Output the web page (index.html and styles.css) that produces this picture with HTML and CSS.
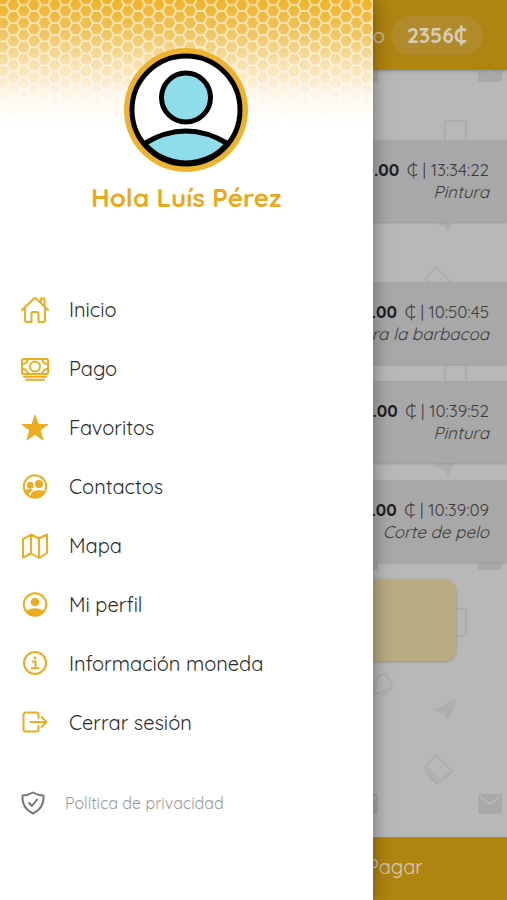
FILE: index.html
```html
<!DOCTYPE html>
<html lang="es">
<head>
<meta charset="UTF-8">
<meta name="viewport" content="width=device-width, initial-scale=1.0">
<title>Menú</title>
<link rel="stylesheet" href="styles.css">
</head>
<body>
<div class="page">
  <svg class="page-bg" aria-hidden="true">
    <defs>
      <pattern id="doodles" width="248" height="244" patternUnits="userSpaceOnUse" patternTransform="translate(368 670)">
        <path d="M5 20 C11 16 6 8 12 5 C18 2 22 8 24 18 L8 24 Z M13 25 L19 23" fill="none" stroke="#adadad" stroke-width="2"/>
        <path d="M89 28 L65 40 L73 43 L76 44 L80 52 Z M87 31 L75 42" fill="#adadad" stroke="#b5b5b5"/>
        <path d="M68 85 L84 101 L73 111 L57 97 Z" fill="none" stroke="#adadad" stroke-width="2"/>
        <path d="M56 98 L72 113 L69 115 L64 111 L61 111 L61 107 Z" fill="#adadad"/>
        <g id="mail">
          <rect x="110" y="124" width="24" height="20" rx="2" fill="#a9a9a9"/>
          <path d="M112 127 L122 134 L132 127" fill="none" stroke="#b8b8b8" stroke-width="2"/>
        </g>
        <use href="#mail" x="-124"/>
        <use href="#mail" x="124"/>
        <rect x="77" y="183" width="21" height="27" rx="1" fill="none" stroke="#adadad" stroke-width="2"/>
      </pattern>
    </defs>
    <rect width="100%" height="100%" fill="url(#doodles)"/>
  </svg>

  <header class="topbar">
    <span class="topbar-label">Saldo</span>
    <span class="balance">2356₵</span>
  </header>

  <main class="moves">
    <section class="day">
      <article class="move">
        <p class="amount"><b>.00</b> <span class="coin">₵</span> | 13:34:22</p>
        <p class="concept">Pintura</p>
      </article>
    </section>
    <section class="day">
      <article class="move">
        <p class="amount"><b>.00</b> <span class="coin">₵</span> | 10:50:45</p>
        <p class="concept">Para la barbacoa</p>
      </article>
      <article class="move">
        <p class="amount"><b>.00</b> <span class="coin">₵</span> | 10:39:52</p>
        <p class="concept">Pintura</p>
      </article>
      <article class="move">
        <p class="amount"><b>.00</b> <span class="coin">₵</span> | 10:39:09</p>
        <p class="concept">Corte de pelo</p>
      </article>
      <div class="notice"></div>
    </section>
  </main>

  <footer class="paybar">
    <button class="pay" type="button">Pagar</button>
  </footer>
</div>

<aside class="drawer">
  <svg class="honeycomb" aria-hidden="true">
    <defs>
      <linearGradient id="honey" x1="0" y1="0" x2="0" y2="1">
        <stop offset="0" stop-color="#eeb32a"/>
        <stop offset="0.25" stop-color="#f0c45c"/>
        <stop offset="0.5" stop-color="#f6dfa9"/>
        <stop offset="0.75" stop-color="#fdf6e6"/>
        <stop offset="1" stop-color="#ffffff"/>
      </linearGradient>
      <pattern id="cells" width="20.8" height="12.1" patternUnits="userSpaceOnUse" patternTransform="translate(2.9 11)">
        <path d="M-3.5 6 H3.5 L6.9 0 H13.9 L17.3 6 H24.3 M3.5 6 L6.9 12.1 H13.9 L17.3 6" fill="none" stroke="#fff" stroke-opacity="0.75" stroke-width="1.5"/>
      </pattern>
    </defs>
    <rect width="100%" height="100%" fill="url(#honey)"/>
    <rect width="100%" height="100%" fill="url(#cells)"/>
  </svg>

  <div class="profile">
    <svg class="avatar" viewBox="0 0 124 124" aria-hidden="true">
      <circle cx="62" cy="62" r="62" fill="#edb32f"/>
      <circle cx="62" cy="62" r="54" fill="#fff"/>
      <path d="M20.5 95.5 Q62 70.5 103.5 95.5 A54 54 0 0 1 20.5 95.5 Z" fill="#8fdcea" stroke="#000" stroke-width="5"/>
      <circle cx="62" cy="62" r="54" fill="none" stroke="#000" stroke-width="5"/>
      <circle cx="62" cy="49.5" r="24.5" fill="#8fdcea" stroke="#000" stroke-width="5"/>
    </svg>
    <h1 class="hello">Hola Luís Pérez</h1>
  </div>

  <nav>
    <ul class="menu">
      <li><a href="#">
        <svg class="icon" viewBox="0 0 28 28"><path d="M4 13 V24 Q4 26 6 26 H10.500 V18 Q10.500 16 12.500 16 H15.500 Q17.500 16 17.500 18 V26 H22 Q24 26 24 24 V13 M1 14 L13 2.500 Q14 1.500 15 2.500 L27 14 M20 7 V2.500 H23.500 V10.500"/></svg>
        Inicio</a></li>
      <li><a href="#">
        <svg class="icon" viewBox="0 0 28 28"><rect x="1" y="4" width="26" height="15" rx="1.500"/><circle cx="14" cy="11.500" r="5"/><path d="M1 9 Q6 9 7 4 M21 4 Q22 9 27 9 M1 14 Q6 14 7 19 M21 19 Q22 14 27 14 M3 21.800 H25 M5 24.700 H23"/></svg>
        Pago</a></li>
      <li><a href="#">
        <svg class="icon icon-solid" viewBox="0 0 28 28"><path d="M14 1.500 L17.300 10.500 H27 L19.300 16.200 L22 26 L14 20.200 L6 26 L8.700 16.200 L1 10.500 H10.700 Z"/></svg>
        Favoritos</a></li>
      <li><a href="#">
        <svg class="icon" viewBox="0 0 28 28"><circle cx="14" cy="13.500" r="11.200"/><path class="fill" d="M9.500 22.500 Q10 17.500 17.500 17.200 Q23 17 24 18.500 Q21 24.500 14 24.700 Q11 24.500 9.500 22.500 Z M3.500 17.500 Q8 15 12.500 17 Q8.500 18.500 7.500 22 Q4.500 20 3.500 17.500 Z"/><circle class="fill" cx="18" cy="11" r="4"/><circle class="fill" cx="9.300" cy="12.200" r="3.500"/></svg>
        Contactos</a></li>
      <li><a href="#">
        <svg class="icon" viewBox="0 0 28 28"><path d="M2 7.200 L10 2.500 L18 6.500 L26 2.500 V21 L18 26 L10 21.500 L2 25.500 Z M10 2.500 V21.500 M18 6.500 V26"/></svg>
        Mapa</a></li>
      <li><a href="#">
        <svg class="icon" viewBox="0 0 28 28"><circle cx="14" cy="13.500" r="11.200"/><circle class="fill" cx="14" cy="11" r="4.300"/><path class="fill" d="M5 20.500 Q8 17.300 14 17.300 Q20 17.300 23 20.500 Q19 25 14 25 Q9 25 5 20.500 Z"/></svg>
        Mi perfil</a></li>
      <li><a href="#">
        <svg class="icon" viewBox="0 0 28 28"><circle cx="14" cy="13" r="11"/><path d="M11.500 11.500 H14.500 V18 M10.800 18.300 H17.500"/><circle class="fill" cx="14" cy="7.800" r="1.500"/></svg>
        Información moneda</a></li>
      <li><a href="#">
        <svg class="icon" viewBox="0 0 28 28"><path d="M17.500 9 V5.500 Q17.500 3.500 15.500 3.500 H5 Q2.500 3.500 2.500 6 V20 Q2.500 22.500 5 22.500 H15.500 Q17.500 22.500 17.500 20.500 V17 M9.500 13 H25 M20.500 8 L25.500 13 L20.500 18"/></svg>
        Cerrar sesión</a></li>
    </ul>
  </nav>

  <a class="privacy" href="#">
    <svg class="shield" viewBox="0 0 24 24" aria-hidden="true"><path d="M12 1.500 Q7 4.500 1.500 4.500 Q0.500 17 12 22.500 Q23.500 17 22.500 4.500 Q17 4.500 12 1.500 Z M8 12 L11 15 L16 8.500"/></svg>
    Política de privacidad
  </a>
</aside>
</body>
</html>
```
FILE: styles.css
```css
* {
  box-sizing: border-box;
}
body {
  margin: 0;
  font-family: Quicksand, Lato, "Open Sans", sans-serif;
  color: #2b2b2b;
}
p, h1, ul {
  margin: 0;
  padding: 0;
}
a {
  color: inherit;
  text-decoration: none;
}

/* page behind the drawer */
.page {
  position: relative;
  display: flex;
  flex-direction: column;
  min-height: 100vh;
  background: #b8b8b8;
}
.page-bg {
  position: absolute;
  width: 100%;
  height: 100%;
}
.topbar, .moves, .paybar {
  position: relative;
}
.topbar {
  display: flex;
  align-items: center;
  justify-content: flex-end;
  gap: 6px;
  height: 70px;
  padding: 0 24px;
  background: #b08411;
  color: #d6cdb8;
  font-size: 20px;
  box-shadow: 0 1px 3px #8a8a8a;
}
.balance {
  padding: 7px 16px;
  border-radius: 20px;
  background: #b18a2b;
  font-size: 21px;
  font-weight: bold;
  line-height: 25px;
}
.moves {
  flex: 1;
}
.day {
  display: flex;
  flex-direction: column;
  gap: 17px;
  padding-top: 60px;
}
.day:first-child {
  padding-top: 70px;
}
.move {
  height: 82px;
  padding: 19px 18px;
  background: #a8a8a8;
  box-shadow: 0 1px 2px #999;
  font-size: 17px;
  line-height: 22px;
  text-align: right;
  color: #3b3b3b;
}
.amount b {
  color: #1c1c1c;
}
.coin {
  margin-left: 3px;
}
.concept {
  font-style: italic;
}
.notice {
  width: 80%;
  height: 82px;
  margin: 0 auto;
  border-radius: 12px;
  background: #b9ac82;
  box-shadow: 0 1px 3px #8f8f8f;
}
.paybar {
  height: 63px;
  background: #b08411;
}
.pay {
  width: 100%;
  height: 100%;
  padding: 0 84px 4px;
  border: 0;
  background: none;
  color: #d6cdb8;
  font: inherit;
  font-size: 20px;
  text-align: right;
}

/* drawer */
.drawer {
  position: absolute;
  top: 0;
  left: 0;
  width: 73.5%;
  min-height: 100%;
  background: #fff;
  box-shadow: 0 0 18px rgba(0, 0, 0, 0.4);
}
.honeycomb {
  position: absolute;
  width: 100%;
  height: 124px;
}
.profile {
  position: relative;
  display: flex;
  flex-direction: column;
  align-items: center;
  padding-top: 48px;
}
.avatar {
  width: 124px;
  height: 124px;
}
.hello {
  margin-top: 10px;
  font-size: 26px;
  line-height: 32px;
  color: #e9a91c;
}
.menu {
  margin-top: 66px;
  list-style: none;
}
.menu a {
  display: flex;
  align-items: center;
  gap: 20px;
  height: 59px;
  padding-left: 21px;
  font-size: 20px;
}
.icon {
  width: 28px;
  height: 28px;
  fill: none;
  stroke: #ecad1f;
  stroke-width: 2;
  stroke-linecap: round;
  stroke-linejoin: round;
}
.icon .fill {
  fill: #ecad1f;
  stroke: none;
}
.icon-solid {
  fill: #ecad1f;
  stroke-width: 1;
}
.privacy {
  display: flex;
  align-items: center;
  gap: 20px;
  margin-top: 39px;
  padding-left: 21px;
  font-size: 16px;
  color: #999;
}
.shield {
  width: 24px;
  height: 24px;
  fill: none;
  stroke: #777;
  stroke-width: 2;
  stroke-linecap: round;
  stroke-linejoin: round;
}
```
